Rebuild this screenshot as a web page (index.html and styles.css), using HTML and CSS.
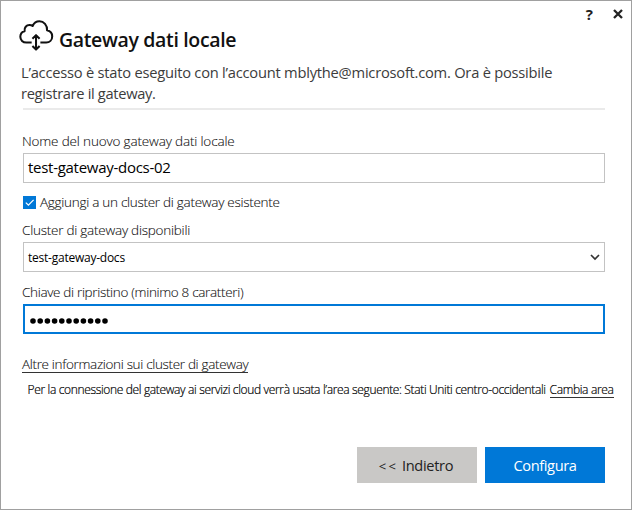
FILE: index.html
```
<!DOCTYPE html>
<html lang="it">
<head>
<meta charset="utf-8">
<title>Gateway dati locale</title>
<link rel="stylesheet" href="styles.css">
</head>
<body>
<main class="dialog">
  <div class="titlebar"><span class="help">?</span>
    <svg class="close" viewBox="0 0 10 10"><path d="M1 1L9 9M9 1L1 9"/></svg></div>
  <header class="heading">
    <svg class="cloud" viewBox="0 0 36 32"><path d="M13 23.3H7.5C3.9 23.3 1.3 20.7 1.3 17.4C1.3 14.3 3.3 12 5.7 11.5C5.2 7.8 7.6 5.2 10.7 5.2C12 5.2 13.2 5.5 14 6.2C15.3 3.3 17.9 1.4 21 1.4C25.6 1.4 29.2 5.2 28.9 10.7C32.2 11.4 34.2 13.8 34.2 17C34.2 20.8 31.5 23.3 28 23.3H22M17.5 16V30M13.8 19.3L17.5 15.6L21.2 19.3M13.8 26.8L17.5 30.5L21.2 26.8"/></svg>
    <h1>Gateway dati locale</h1>
  </header>
  <p class="intro"><span>L’accesso è stato eseguito con l’account mblythe@microsoft.com. Ora è possibile</span><br><span class="intro-end">registrare il gateway.</span></p>
  <hr class="divider">
  <label class="label l-name">Nome del nuovo gateway dati locale</label>
  <div class="field name"><span>test-gateway-docs-02</span></div>
  <div class="check"><span class="box"><svg viewBox="0 0 13 13"><path d="M2.8 6.6L5.4 9.2L10.6 3.8"/></svg></span><span>Aggiungi a un cluster di gateway esistente</span></div>
  <label class="label l-cluster">Cluster di gateway disponibili</label>
  <div class="field select"><span>test-gateway-docs</span><svg class="chevron" viewBox="0 0 10 7"><path d="M1 1L5 5L9 1"/></svg></div>
  <label class="label l-key">Chiave di ripristino (minimo 8 caratteri)</label>
  <div class="field focused"><svg class="dots" viewBox="0 0 80 6"><path d="M3 3h72.5"/></svg></div>
  <div class="more"><a>Altre informazioni sui cluster di gateway</a></div>
  <div class="region"><span>Per la connessione del gateway ai servizi cloud verrà usata l’area seguente: Stati Uniti centro-occidentali</span><a>Cambia area</a></div>
  <footer class="actions"><button class="back"><span class="arrows">&lt;&lt;</span> Indietro</button><button class="go">Configura</button></footer>
</main>
</body>
</html>
```
FILE: styles.css
```
* { box-sizing: border-box; }
body { margin: 0; font-family: "Open Sans", "Noto Sans", sans-serif; background: #fff; color: #111; }
.dialog { width: 632px; height: 510px; border: 1px solid #a0a0a0; padding: 0 26px 0 21px; overflow: hidden; }
.dialog span, .dialog a { white-space: nowrap; }
.titlebar { display: flex; justify-content: flex-end; align-items: center; gap: 20px; height: 18px; padding-top: 8px; margin-right: -18px; }
.help { font-size: 15px; line-height: 14px; font-weight: 700; color: #222; }
.close { width: 10px; height: 10px; fill: none; stroke: #222; stroke-width: 2.3; }
.heading { display: flex; height: 37px; margin-left: -4px; }
.cloud { width: 35px; height: 31px; margin: 1px 0 0 1px; fill: none; stroke: #111; stroke-width: 2.1; stroke-linejoin: round; }
h1 { margin: 6px 0 0 5px; font-size: 19.5px; line-height: 30px; font-weight: 600; letter-spacing: -0.35px; }
.intro { margin: 6px 0 0 -1px; font-size: 14.7px; line-height: 21px; letter-spacing: -0.235px; color: #3c3c3c; height: 46px; }
.intro-end { letter-spacing: -0.34px; }
.divider { margin: 0 0 0 1px; height: 2px; border: 0; background: #eaeaea; }
.label { display: block; font-size: 13.5px; line-height: 20px; font-weight: 300; -webkit-text-stroke: 0.1px #111; }
.l-name { margin-top: 21px; letter-spacing: -0.16px; }
.field { display: flex; align-items: center; margin: 1px 0 0 1px; height: 30px; border: 1px solid #c3c3c3; padding: 0 4px; font-size: 15px; color: #000; }
.name { margin-top: 2px; letter-spacing: -0.28px; padding-bottom: 3px; }
.check { display: flex; align-items: center; gap: 4px; margin: 9px 0 0 1px; height: 20px; font-size: 13.5px; font-weight: 300; letter-spacing: -0.28px; -webkit-text-stroke: 0.1px #111; }
.box { width: 13px; height: 13px; background: #0078d7; }
.box svg { display: block; fill: none; stroke: #fff; stroke-width: 1.2; }
.l-cluster { margin-top: 8px; letter-spacing: -0.24px; }
.select { margin-top: 2px; font-size: 12px; letter-spacing: -0.24px; justify-content: space-between; }
.chevron { width: 10px; height: 7px; fill: none; stroke: #333; stroke-width: 1.7; }
.l-key { margin-top: 10px; letter-spacing: -0.33px; }
.focused { margin-top: 2px; border: 2px solid #0078d7; padding: 4px 4px 0 5px; }
.dots { width: 80px; height: 6px; fill: none; stroke: #000; stroke-width: 5.6; stroke-linecap: round; stroke-dasharray: 0 7.2; }
.more { margin-top: 21px; height: 17px; font-size: 13.5px; font-weight: 300; line-height: 17px; letter-spacing: -0.33px; -webkit-text-stroke: 0.1px #111; }
.more a, .region a { border-bottom: 1px solid #333; }
.more a { display: inline-block; height: 18px; line-height: 18px; }
.region { display: flex; justify-content: space-between; height: 16px; margin: 10px -8.5px 0 5.5px; font-size: 12px; line-height: 15px; font-weight: 300; letter-spacing: -0.345px; color: #000; -webkit-text-stroke: 0.2px #000; }
.actions { display: flex; justify-content: flex-end; gap: 8px; margin-top: 49px; }
.actions button { width: 120px; height: 36px; border: 0; padding: 0; font: 14.6px "Open Sans", sans-serif; letter-spacing: -0.38px; }
.actions .back { background: #c9c8c6; color: #222; letter-spacing: -0.3px; padding-right: 2px; }
.back .arrows { font-size: 13px; letter-spacing: 2.4px; }
.actions .go { background: #0078d7; color: #fff; }
```
